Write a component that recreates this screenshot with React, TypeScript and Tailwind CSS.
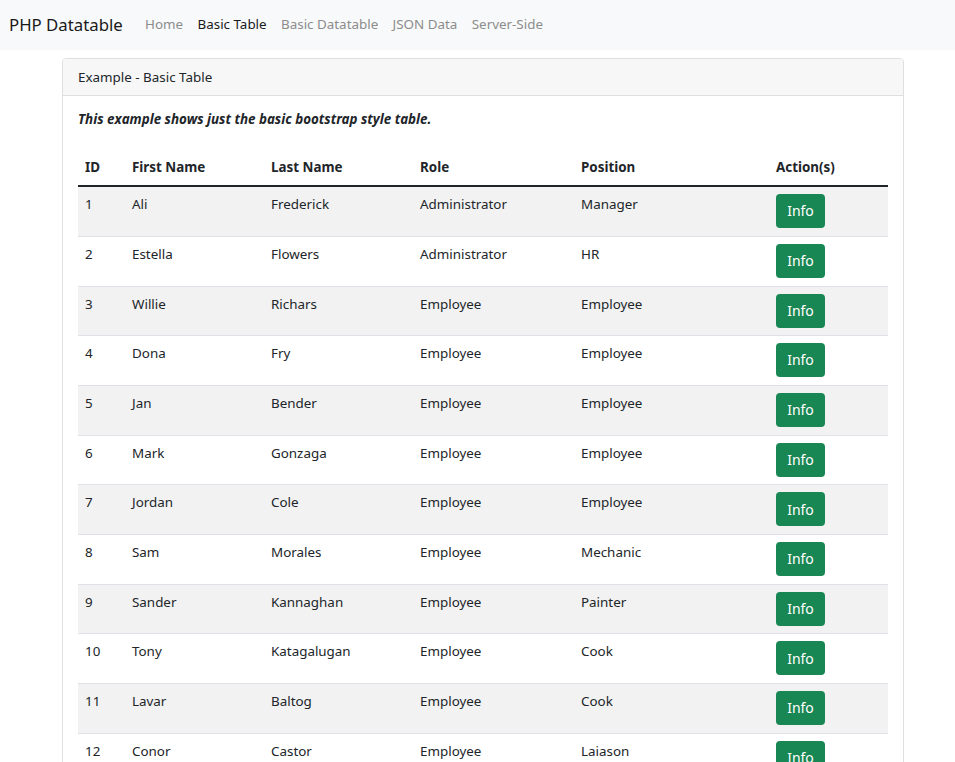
const links = [
  { label: "Home", active: false },
  { label: "Basic Table", active: true },
  { label: "Basic Datatable", active: false },
  { label: "JSON Data", active: false },
  { label: "Server-Side", active: false },
];

const rows = [
  [1, "Ali", "Frederick", "Administrator", "Manager"],
  [2, "Estella", "Flowers", "Administrator", "HR"],
  [3, "Willie", "Richars", "Employee", "Employee"],
  [4, "Dona", "Fry", "Employee", "Employee"],
  [5, "Jan", "Bender", "Employee", "Employee"],
  [6, "Mark", "Gonzaga", "Employee", "Employee"],
  [7, "Jordan", "Cole", "Employee", "Employee"],
  [8, "Sam", "Morales", "Employee", "Mechanic"],
  [9, "Sander", "Kannaghan", "Employee", "Painter"],
  [10, "Tony", "Katagalugan", "Employee", "Cook"],
  [11, "Lavar", "Baltog", "Employee", "Cook"],
  [12, "Conor", "Castor", "Employee", "Laiason"],
];

export default function App() {
  return (
    <div
      className="min-h-screen bg-white text-[#212529] text-[13.4px] leading-[21.6px]"
      style={{ fontFamily: '"Noto Sans", "Open Sans", sans-serif' }}
    >
      {/* navbar */}
      <nav className="h-[50px] bg-[#f8f9fa] flex items-center pl-[9px]">
        <span className="text-[16.8px] text-[#1a1a1a] mr-[15px]">PHP Datatable</span>
        <ul className="flex items-center">
          {links.map((l) => (
            <li
              key={l.label}
              className={
                "px-[7.2px] " + (l.active ? "text-[#1a1a1a]" : "text-[#8c8c8c]")
              }
            >
              {l.label}
            </li>
          ))}
        </ul>
      </nav>

      {/* card */}
      <div className="ml-[62px] mt-[8px] w-[842px] border border-[#dfdfdf] rounded-[4px] overflow-hidden">
        <div className="h-[37px] bg-[#f7f7f7] border-b border-[#dfdfdf] px-[15px] pt-[1px] flex items-center">
          Example - Basic Table
        </div>
        <div className="px-[15px] pt-[13px]">
          <p className="font-bold italic mb-[19px]">
            This example shows just the basic bootstrap style table.
          </p>
          <table className="w-[810px] table-fixed border-collapse">
            <colgroup>
              <col className="w-[47px]" />
              <col className="w-[139px]" />
              <col className="w-[149px]" />
              <col className="w-[161px]" />
              <col className="w-[195px]" />
              <col className="w-[119px]" />
            </colgroup>
            <thead>
              <tr className="border-b-2 border-[#212529] text-left">
                {["ID", "First Name", "Last Name", "Role", "Position", "Action(s)"].map((h) => (
                  <th key={h} className="font-bold px-[7px] pt-[7px] pb-[7px] align-bottom">
                    {h}
                  </th>
                ))}
              </tr>
            </thead>
            <tbody>
              {rows.map((r, i) => (
                <tr
                  key={r[0]}
                  className={
                    "border-b border-[#dee2e6] " + (i % 2 === 0 ? "bg-[#f2f2f2]" : "bg-white")
                  }
                >
                  {r.map((c, j) => (
                    <td key={j} className="px-[7px] pt-[7px] pb-[7px] align-top">
                      {c}
                    </td>
                  ))}
                  <td className="px-[7px] pt-[7px] pb-[7.7px] align-top">
                    <button className="h-[34px] w-[49px] rounded-[4px] bg-[#198754] text-white text-[14px]">
                      Info
                    </button>
                  </td>
                </tr>
              ))}
            </tbody>
          </table>
        </div>
      </div>
    </div>
  );
}
